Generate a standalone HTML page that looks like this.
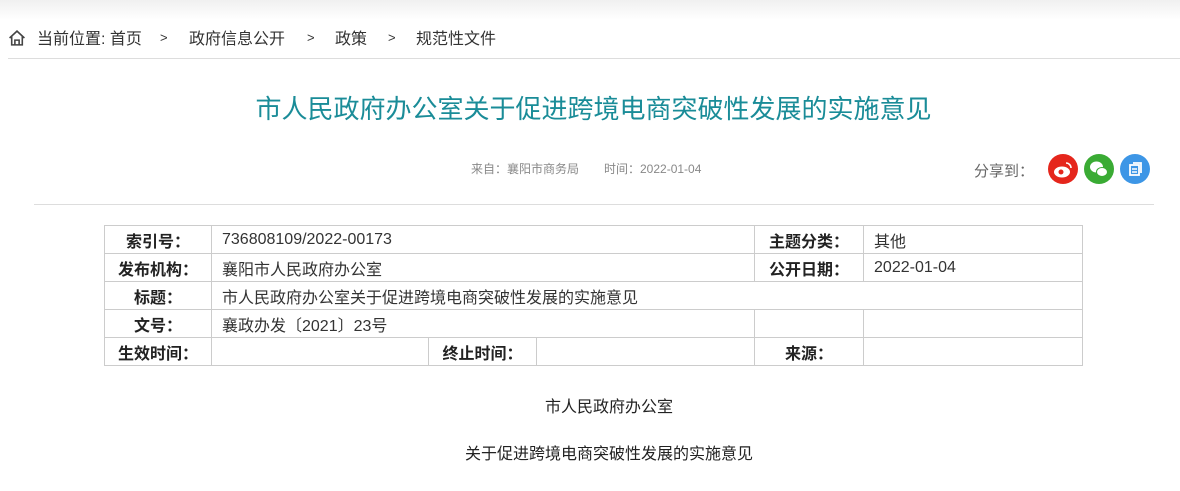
<!DOCTYPE html>
<html><head><meta charset="utf-8"><style>
*{margin:0;padding:0;box-sizing:border-box}
body{width:1180px;height:491px;background:#fff;font-family:"Liberation Sans","Noto Sans CJK SC",sans-serif;position:relative;overflow:hidden;color:#333}
.top{position:absolute;left:0;top:0;width:1180px;height:20px;background:linear-gradient(#f0f0f0,#fff)}
.bc{position:absolute;left:8px;top:25px;font-size:16px;color:#333;white-space:nowrap}
.bc span{position:absolute;top:0}
.bc .g{font-size:13px;top:5px}
.hr1{position:absolute;left:8px;top:58px;width:1172px;height:1px;background:#ddd}
h1{position:absolute;left:0;width:1187px;top:89px;text-align:center;font-size:26px;font-weight:normal;color:#1a8c98;white-space:nowrap}
.meta{position:absolute;top:160px;font-size:12px;color:#888}
.share{position:absolute;left:974px;top:160px;font-size:15px;color:#666}
.ic{position:absolute;top:154px;width:30px;height:30px;border-radius:50%}
.hr2{position:absolute;left:34px;top:204px;width:1120px;height:1px;background:#ddd}
table{position:absolute;left:104px;top:225px;border-collapse:collapse;table-layout:fixed;width:978px;font-size:16px}
td{border:1px solid #ccc;height:28px;padding:0 0 0 10px;white-space:nowrap;color:#333}
td.l{font-weight:bold;text-align:center;padding:0;color:#222}
p{position:absolute;left:0;width:1218px;text-align:center;font-size:16px;color:#222}
</style></head><body>
<div class="top"></div>
<svg style="position:absolute;left:8px;top:29px" width="18" height="18" viewBox="0 0 17 16"><path d="M1.5 8 L8.5 1.5 L15.5 8 M3.5 6.5 V14.5 H13.5 V6.5 M6.5 14.5 V10 H10.5 V14.5" fill="none" stroke="#444" stroke-width="1.5"/></svg>
<div class="bc"><span style="left:29px">当前位置: 首页</span><span class="g" style="left:152px">&gt;</span><span style="left:181px">政府信息公开</span><span class="g" style="left:299px">&gt;</span><span style="left:327px">政策</span><span class="g" style="left:380px">&gt;</span><span style="left:408px">规范性文件</span></div>
<div class="hr1"></div>
<h1>市人民政府办公室关于促进跨境电商突破性发展的实施意见</h1>
<div class="meta" style="left:471px">来自：襄阳市商务局</div>
<div class="meta" style="left:604px">时间：2022-01-04</div>
<div class="share">分享到：</div>
<div class="ic" style="left:1048px;background:#e5261c"><svg width="30" height="30"><ellipse cx="14" cy="18" rx="8" ry="5.5" fill="#fff"/><circle cx="13" cy="18" r="2.5" fill="#e5261c"/><path d="M18 9a5 5 0 0 1 5 5" stroke="#fff" stroke-width="1.6" fill="none"/></svg></div>
<div class="ic" style="left:1084px;background:#3aab34"><svg width="30" height="30"><ellipse cx="12.5" cy="13" rx="6.5" ry="5.5" fill="#fff"/><ellipse cx="18" cy="18" rx="5.5" ry="4.5" fill="#fff" stroke="#3aab34" stroke-width="1"/></svg></div>
<div class="ic" style="left:1120px;background:#3d96e6"><svg width="30" height="30"><rect x="10" y="11" width="9" height="10" fill="none" stroke="#fff" stroke-width="1.8"/><path d="M13 9h8v10" fill="none" stroke="#fff" stroke-width="1.8"/><path d="M12 15h5M12 18h5" stroke="#fff" stroke-width="1.4"/></svg></div>
<div class="hr2"></div>
<table>
<colgroup><col style="width:107px"><col style="width:217px"><col style="width:108px"><col style="width:218px"><col style="width:109px"><col style="width:219px"></colgroup>
<tr><td class="l">索引号：</td><td colspan="3">736808109/2022-00173</td><td class="l">主题分类：</td><td>其他</td></tr>
<tr><td class="l">发布机构：</td><td colspan="3">襄阳市人民政府办公室</td><td class="l">公开日期：</td><td>2022-01-04</td></tr>
<tr><td class="l">标题：</td><td colspan="5">市人民政府办公室关于促进跨境电商突破性发展的实施意见</td></tr>
<tr><td class="l">文号：</td><td colspan="3">襄政办发〔2021〕23号</td><td></td><td></td></tr>
<tr><td class="l">生效时间：</td><td></td><td class="l">终止时间：</td><td></td><td class="l">来源：</td><td></td></tr>
</table>
<p style="top:393px">市人民政府办公室</p>
<p style="top:440px">关于促进跨境电商突破性发展的实施意见</p>
</body></html>
